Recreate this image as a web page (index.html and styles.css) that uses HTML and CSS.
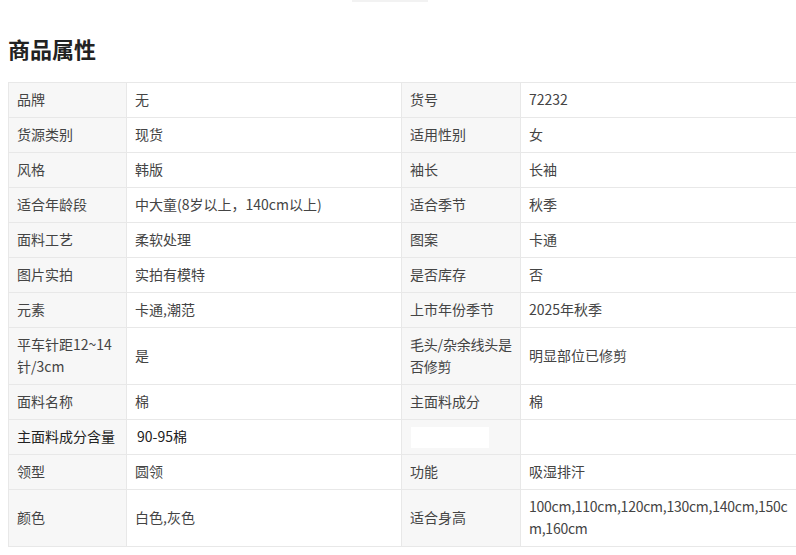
FILE: index.html
```html
<!DOCTYPE html>
<html lang="zh">
<head>
<meta charset="utf-8">
<link rel="stylesheet" href="styles.css">
</head>
<body>
<div class="topbar"><span class="sliver"></span></div>
<div class="page">
  <h2 class="title">商品属性</h2>
  <table class="attrs">
    <colgroup>
      <col class="c-l1"><col class="c-v1"><col class="c-l2"><col class="c-v2">
    </colgroup>
    <tbody>
      <tr><td class="lbl">品牌</td><td>无</td><td class="lbl">货号</td><td>72232</td></tr>
      <tr><td class="lbl">货源类别</td><td>现货</td><td class="lbl">适用性别</td><td>女</td></tr>
      <tr><td class="lbl">风格</td><td>韩版</td><td class="lbl">袖长</td><td>长袖</td></tr>
      <tr><td class="lbl">适合年龄段</td><td>中大童(8岁以上，140cm以上)</td><td class="lbl">适合季节</td><td>秋季</td></tr>
      <tr><td class="lbl">面料工艺</td><td>柔软处理</td><td class="lbl">图案</td><td>卡通</td></tr>
      <tr><td class="lbl">图片实拍</td><td>实拍有模特</td><td class="lbl">是否库存</td><td>否</td></tr>
      <tr><td class="lbl">元素</td><td>卡通,潮范</td><td class="lbl">上市年份季节</td><td>2025年秋季</td></tr>
      <tr><td class="lbl">平车针距12~14针/3cm</td><td>是</td><td class="lbl tight">毛头/杂余线头是否修剪</td><td>明显部位已修剪</td></tr>
      <tr><td class="lbl">面料名称</td><td>棉</td><td class="lbl">主面料成分</td><td>棉</td></tr>
      <tr><td class="lbl dark">主面料成分含量</td><td class="dark"><span class="indent">90-95棉</span></td><td class="lbl blank"><span class="mask"></span></td><td></td></tr>
      <tr><td class="lbl">领型</td><td>圆领</td><td class="lbl">功能</td><td>吸湿排汗</td></tr>
      <tr class="tall"><td class="lbl">颜色</td><td>白色,灰色</td><td class="lbl">适合身高</td><td class="nums">100cm,110cm,120cm,130cm,140cm,150cm,160cm</td></tr>
    </tbody>
  </table>
</div>
</body>
</html>
```

FILE: styles.css
```css
html, body {
  margin: 0;
  padding: 0;
  background: #fff;
  overflow: hidden;
}
body {
  font-family: "Noto Sans CJK SC", "Noto Sans", sans-serif;
  color: #333;
}
.topbar {
  height: 2px;
  display: flex;
  padding-left: 352px;
}
.sliver {
  width: 76px;
  height: 2px;
  background: #f2f2f2;
}
.page {
  padding-left: 8px;
}
.title {
  margin: 31px 0 19px;
  font-size: 22px;
  line-height: 30px;
  font-weight: 700;
  color: #222;
}
.attrs {
  border-collapse: collapse;
  table-layout: fixed;
  width: 792px;
  font-size: 14px;
}
.c-l1 { width: 118px; }
.c-v1 { width: 275px; }
.c-l2 { width: 119px; }
.c-v2 { width: 280px; }
.attrs td {
  border: 1px solid #e8e8e8;
  padding: 5px 8px 7px;
  line-height: 22px;
  vertical-align: middle;
  word-break: break-all;
  color: #444;
}
.attrs td.lbl {
  background: #f7f7f7;
}
.attrs td.tight {
  padding-right: 2px;
  letter-spacing: -0.2px;
}
.attrs td.dark {
  color: #222;
}
.attrs td.nums {
  letter-spacing: -0.25px;
}
.indent {
  padding-left: 2px;
}
.tall td {
  height: 44px;
}
.blank {
  position: relative;
}
.mask {
  position: absolute;
  left: 9px;
  top: 7px;
  width: 78px;
  height: 21px;
  background: #fff;
}
```
